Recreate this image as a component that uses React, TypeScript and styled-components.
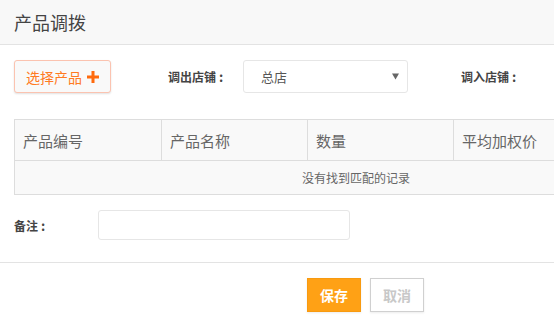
import React from "react";
import styled, { createGlobalStyle } from "styled-components";

const Global = createGlobalStyle`
  html, body { margin: 0; padding: 0; background: #fff; }
  body { font-family: "Noto Sans CJK SC", "Noto Sans", sans-serif; overflow: hidden; }
  * { box-sizing: border-box; }
`;

const Page = styled.div`
  width: 554px;
  height: 324px;
  overflow: hidden;
  background: #fff;
`;

const Header = styled.div`
  height: 45px;
  background: #f8f8f8;
  border-bottom: 1px solid #e3e3e3;
  display: flex;
  align-items: center;
  padding-left: 14px;
  font-size: 18px;
  color: #444;
`;

const Toolbar = styled.div`
  display: flex;
  align-items: center;
  margin-top: 15px;
  padding-left: 14px;
  height: 33px;
  white-space: nowrap;
`;

const PickButton = styled.button`
  width: 97px;
  height: 33px;
  border: 1px solid #fbc3b0;
  border-radius: 3px;
  background: #f9f9f9;
  box-shadow: 0 1px 2px rgba(0, 0, 0, 0.12);
  color: #ff7a22;
  font-family: inherit;
  font-size: 14px;
  display: flex;
  align-items: center;
  justify-content: center;
  gap: 5px;
  padding: 0;
`;

const Label = styled.span<{ $ml?: number; $w?: number }>`
  font-size: 12px;
  font-weight: bold;
  color: #444;
  margin-left: ${(p) => p.$ml ?? 0}px;
  width: ${(p) => (p.$w ? `${p.$w}px` : "auto")};
  flex-shrink: 0;
`;

const Colon = styled.span`
  margin-left: 3px;
  font-size: 13px;
`;

const Select = styled.div`
  width: 165px;
  height: 33px;
  border: 1px solid #e6e6e6;
  border-radius: 3px;
  display: flex;
  align-items: center;
  justify-content: space-between;
  padding: 0 8px 0 17px;
  font-size: 13px;
  color: #555;
  flex-shrink: 0;
`;

const Table = styled.div`
  margin: 26px 0 0 14px;
  width: 684px;
  border: 1px solid #dddddd;
  background: #f9f9f9;
`;

const HeadRow = styled.div`
  display: grid;
  grid-template-columns: 146px 146px 146px 1fr;
  height: 41px;
  border-bottom: 1px solid #dddddd;
`;

const HeadCell = styled.div`
  display: flex;
  align-items: center;
  padding-left: 8px;
  font-size: 15px;
  color: #666;
  border-left: 1px solid #dddddd;
  &:first-child { border-left: none; }
`;

const EmptyRow = styled.div`
  height: 33px;
  display: flex;
  align-items: center;
  justify-content: center;
  font-size: 12px;
  color: #666;
`;

const RemarkRow = styled.div`
  display: flex;
  align-items: center;
  margin-top: 15px;
  padding-left: 14px;
  height: 30px;
`;

const TextInput = styled.div`
  width: 252px;
  height: 30px;
  border: 1px solid #e6e6e6;
  border-radius: 3px;
`;

const Divider = styled.div`
  margin-top: 22px;
  border-top: 1px solid #e3e3e3;
`;

const Footer = styled.div`
  display: flex;
  gap: 9px;
  padding: 15px 0 0 307px;
`;

const Btn = styled.button<{ $primary?: boolean }>`
  width: 54px;
  height: 34px;
  border-radius: 0;
  font-family: inherit;
  font-size: 14px;
  font-weight: bold;
  padding: 0;
  border: 1px solid ${(p) => (p.$primary ? "#f89a10" : "#d0d0d0")};
  background: ${(p) => (p.$primary ? "#ffa115" : "#fff")};
  color: ${(p) => (p.$primary ? "#fff" : "#c8c8c8")};
  box-shadow: 0 1px 2px rgba(0, 0, 0, 0.08);
`;

export default function App() {
  return (
    <Page>
      <Global />
      <Header>产品调拨</Header>
      <Toolbar>
        <PickButton>
          选择产品
          <svg width="12" height="12" viewBox="0 0 12 12">
            <path d="M4.5 0h3v4.5H12v3H7.5V12h-3V7.5H0v-3h4.5z" fill="#ff6a0d" />
          </svg>
        </PickButton>
        <Label $ml={57} $w={75}>调出店铺<Colon>:</Colon></Label>
        <Select>
          <span>总店</span>
          <svg width="7" height="7" viewBox="0 0 7 7">
            <path d="M0 0.5h7L3.5 6.5z" fill="#666" />
          </svg>
        </Select>
        <Label $ml={53}>调入店铺<Colon>:</Colon></Label>
      </Toolbar>
      <Table>
        <HeadRow>
          <HeadCell>产品编号</HeadCell>
          <HeadCell>产品名称</HeadCell>
          <HeadCell>数量</HeadCell>
          <HeadCell>平均加权价</HeadCell>
        </HeadRow>
        <EmptyRow>没有找到匹配的记录</EmptyRow>
      </Table>
      <RemarkRow>
        <Label $w={84}>备注<Colon>:</Colon></Label>
        <TextInput />
      </RemarkRow>
      <Divider />
      <Footer>
        <Btn $primary>保存</Btn>
        <Btn>取消</Btn>
      </Footer>
    </Page>
  );
}
